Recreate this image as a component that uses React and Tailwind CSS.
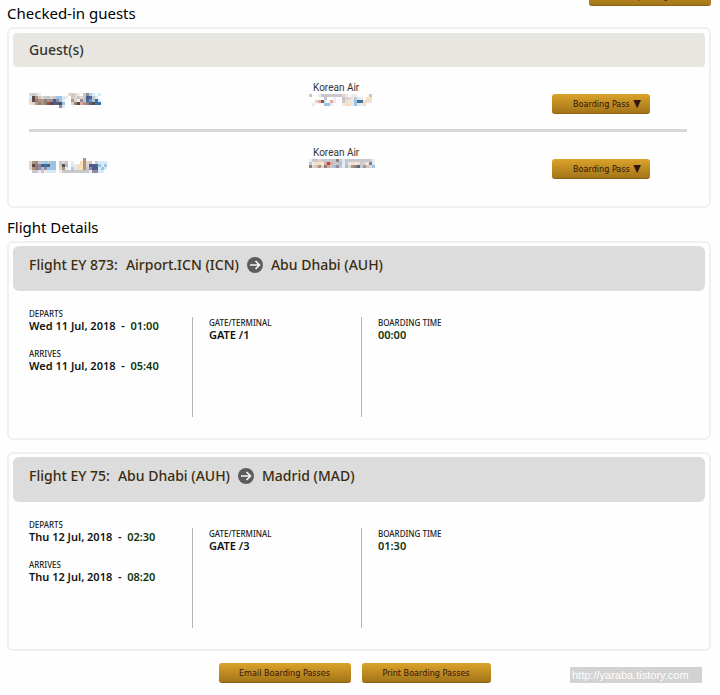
import clsx from "clsx";

// colours of the blocks that cover the private names and numbers
const BLOCKS = {
  a: "#e3d5cb",
  b: "#b3937c",
  c: "#5b4a48",
  d: "#8f8aa0",
  e: "#4a5a8c",
  f: "#9dc3e3",
  g: "#d6ebf7",
  h: "#c8c8cc",
  i: "#f7dfbd",
  j: "#a5473d",
  k: "#e0a79a",
  l: "#3f6f9f",
  m: "#eceaea",
  n: "#8d8078",
};

const guests = [
  {
    id: "guest1",
    name: [
      "aham.........aham.hdhg.g",
      "gcbhahhahffgm.hahahelhg.",
      "acnbbnbdedfg..bamdhldflg",
      "iabnbnjceecf..anckbnlcll",
      "..........dg............",
    ],
    number: [
      "h..mhhhhhhham.mm....h.",
      ".....h..m..haamhgm.ii.",
      "..akjg.km..himgflliig.",
      ".m...ffm...miimfgmi...",
    ],
  },
  {
    id: "guest2",
    name: [
      "..................b.......",
      "abdhhfhff.hah.m..ibah.hggg",
      "acndeleff.hcf.gmiibaeelfgf",
      "abndfdfff.abg.hgiibhdeegfg",
      ".hhmhmggg.mhhhhhhhhhmddgg.",
    ],
    number: [
      "mhhahhhhhnhghhhhhhhhhm",
      "hmiimkjkhhfmhmimihamng",
      "nahbankhfdhmfabnlhbhaf",
    ],
  },
];

const flights = [
  {
    number: "EY 873",
    from: "Airport.ICN (ICN)",
    to: "Abu Dhabi (AUH)",
    date: "Wed 11 Jul, 2018",
    departs: "01:00",
    arrives: "05:40",
    gate: "GATE /1",
    boarding: "00:00",
  },
  {
    number: "EY 75",
    from: "Abu Dhabi (AUH)",
    to: "Madrid (MAD)",
    date: "Thu 12 Jul, 2018",
    departs: "02:30",
    arrives: "08:20",
    gate: "GATE /3",
    boarding: "01:30",
  },
];

const Mosaic = ({ rows, label }) => (
  <svg
    role="img"
    aria-label={label}
    width={rows[0].length * 3}
    height={rows.length * 3}
    shapeRendering="crispEdges"
    className="block"
  >
    {rows.map((row, y) =>
      row.split("").map((c, x) =>
        BLOCKS[c] ? (
          <rect key={`${x}-${y}`} x={x * 3} y={y * 3} width="3" height="3" fill={BLOCKS[c]} />
        ) : null
      )
    )}
  </svg>
);

const GoldButton = ({ className, children }) => (
  <button
    type="button"
    className={clsx(
      "h-5 shrink-0 rounded-[3px] border-b border-[#8a6412] bg-linear-to-b from-[#dca32b] to-[#a37518] text-center font-['DejaVu_Sans_Condensed','DejaVu_Sans',sans-serif] text-[9px] leading-5 whitespace-nowrap text-[#33130a]",
      className
    )}
  >
    {children}
  </button>
);

const ArrowIcon = () => (
  <svg width="16" height="16" viewBox="0 0 16 16" fill="none" aria-hidden="true">
    <circle cx="8" cy="8" r="8" fill="#5c5c5c" />
    <path d="M3 8h9.5M8.5 4l4 4-4 4" stroke="#f4f4f4" strokeWidth="1.7" />
  </svg>
);

const Field = ({ label, children }) => (
  <div>
    <dt className="text-[8px] leading-3 font-medium text-[#222]">{label}</dt>
    <dd className="text-[11px] leading-3 font-semibold whitespace-pre text-[#111]">{children}</dd>
  </div>
);

const FlightCard = ({ flight }) => (
  <article className="rounded-md border-2 border-[#f0f0f0] px-1 py-[3px]">
    <h3 className="flex h-[45px] items-start rounded-md bg-[#dcdcdc] px-4 pt-[9px] text-[14px] leading-5 font-medium whitespace-pre text-[#3a2c10]">
      <span>Flight {flight.number}:</span>
      <span className="ml-2">{flight.from}</span>
      <span className="mx-2 mt-0.5">
        <ArrowIcon />
      </span>
      <span>{flight.to}</span>
    </h3>
    <dl className="flex px-4 pb-[18px]">
      <div className="flex w-[163px] flex-col gap-4 pt-[17px]">
        <Field label="DEPARTS">
          {flight.date}  -  <time className="text-[#0d3308]">{flight.departs}</time>
        </Field>
        <Field label="ARRIVES">
          {flight.date}  -  <time className="text-[#0d3308]">{flight.arrives}</time>
        </Field>
      </div>
      <div className="mt-[26px] h-[100px] w-[169px] border-l border-[#b4b4b4] pl-4">
        <Field label="GATE/TERMINAL">{flight.gate}</Field>
      </div>
      <div className="mt-[26px] h-[100px] flex-1 border-l border-[#b4b4b4] pl-4">
        <Field label="BOARDING TIME">
          <time className="text-[#0d3308]">{flight.boarding}</time>
        </Field>
      </div>
    </dl>
  </article>
);

export default function App() {
  return (
    <main className="min-h-screen overflow-hidden bg-[#fefefe] pr-[9px] pl-[7px] font-['Noto_Sans',sans-serif] text-black">
      <header className="flex items-start justify-between">
        <h2 className="mt-[3px] mb-1 text-[15px] leading-5">Checked-in guests</h2>
        <GoldButton className="-mt-[14px] w-[122px]">Help & Login</GoldButton>
      </header>

      <section className="rounded-md border-2 border-[#f0f0f0] px-1 pt-1 pb-3">
        <h3 className="rounded-sm bg-[#e8e6e0] px-4 text-[14px] leading-[34px] font-medium text-[#333]">
          Guest(s)
        </h3>
        <ul className="mr-[18px] ml-4">
          {guests.map((guest) => (
            <li
              key={guest.id}
              className="flex h-[65px] items-start not-last:border-b-3 not-last:border-[#d6d6d6] last:h-[62px]"
            >
              <div className="w-[280px] pt-[26px]">
                <Mosaic rows={guest.name} label="Guest name" />
              </div>
              <div className="flex-1 pt-[15px]">
                <p className="pl-1 font-['Roboto',sans-serif] text-[10px] leading-3 text-[#333]">Korean Air</p>
                <Mosaic rows={guest.number} label="Frequent flyer number" />
              </div>
              <GoldButton className="mt-[27px] mr-[37px] w-[98px] pl-3">
                Boarding Pass <span className="ml-px text-[11px]">▼</span>
              </GoldButton>
            </li>
          ))}
        </ul>
      </section>

      <h2 className="mt-[9px] mb-1 text-[15px] leading-5">Flight Details</h2>
      <section className="flex flex-col gap-3">
        {flights.map((flight) => (
          <FlightCard key={flight.number} flight={flight} />
        ))}
      </section>

      <footer className="relative mt-3 flex justify-center gap-[11px] pr-[9px]">
        <GoldButton className="w-[132px]">Email Boarding Passes</GoldButton>
        <GoldButton className="w-[129px]">Print Boarding Passes</GoldButton>
        <a
          href="http://yaraba.tistory.com"
          className="absolute top-1 right-[9px] w-[132px] bg-[#d2d2d2] pl-0.5 font-['Liberation_Sans',sans-serif] text-[11px] leading-4 text-white"
        >
          http://yaraba.tistory.com
        </a>
      </footer>
    </main>
  );
}
